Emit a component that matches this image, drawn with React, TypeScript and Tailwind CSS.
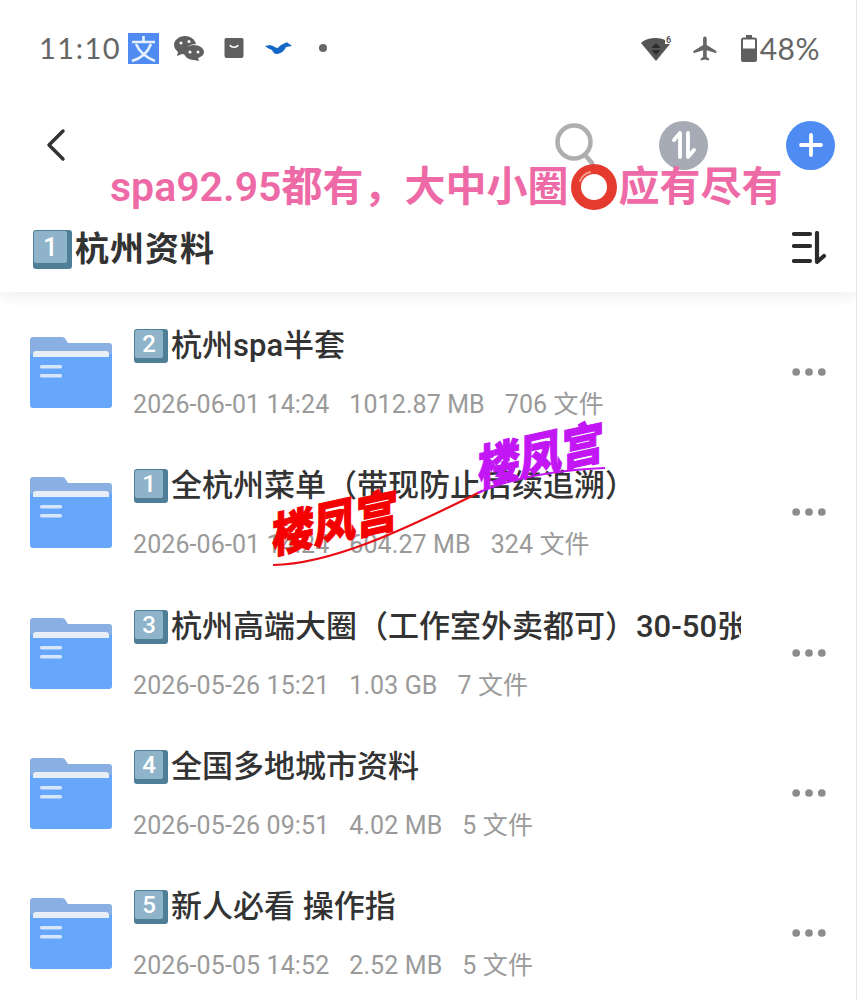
import { MoreHorizontal } from "lucide-react"

const rows = [
  { n: "2", title: "杭州spa半套", date: "2026-06-01 14:24", size: "1012.87 MB", count: "706 文件" },
  { n: "1", title: "全杭州菜单（带现防止后续追溯）", date: "2026-06-01 14:24", size: "604.27 MB", count: "324 文件" },
  { n: "3", title: "杭州高端大圈（工作室外卖都可）30-50张", date: "2026-05-26 15:21", size: "1.03 GB", count: "7 文件" },
  { n: "4", title: "全国多地城市资料", date: "2026-05-26 09:51", size: "4.02 MB", count: "5 文件" },
  { n: "5", title: "新人必看 操作指", date: "2026-05-05 14:52", size: "2.52 MB", count: "5 文件" },
]

function Keycap({ n, big }: { n: string; big?: boolean }) {
  return (
    <span
      className={`relative inline-flex shrink-0 items-center justify-center rounded-[3px] bg-[#4f7f97] ${
        big ? "h-[39px] w-[39px]" : "h-[34px] w-[34px]"
      }`}
    >
      <span
        className={`absolute left-[1px] top-[1px] flex items-center justify-center rounded-[2px] bg-[#8fb4c9] font-medium text-white ${
          big ? "h-[32px] w-[33px] text-[26px]" : "h-[28px] w-[28px] text-[24px]"
        }`}
      >
        {n}
      </span>
    </span>
  )
}

function FolderIcon() {
  return (
    <svg width="82" height="71" viewBox="0 0 82 71" className="shrink-0">
      <path d="M3 0h29c2 0 3 1 4 3l2 3h41c2 0 3 1 3 3v18H0V3c0-2 1-3 3-3z" fill="#8aafe2" />
      <path d="M0 17h82v51c0 2-1 3-3 3H3c-2 0-3-1-3-3z" fill="#66a6fb" />
      <path d="M3 17c0-2 1-3 3-3h70c2 0 3 1 3 3v3H3z" fill="#e8eef6" />
      <rect x="10" y="28" width="22" height="3.5" rx="1.5" fill="#d6e6fb" />
      <rect x="10" y="37" width="22" height="3.5" rx="1.5" fill="#d6e6fb" />
    </svg>
  )
}

function StatusLeft() {
  return (
    <div className="flex items-center text-[#666]">
      <span className="w-[89px] text-[29px] font-['Lato',sans-serif] tracking-[1.5px]">11:10</span>
      <svg width="31" height="31" viewBox="0 0 31 31">
        <rect width="31" height="31" fill="#4f8bf0" />
        <path d="M15.5 3v5M4 9h23M8 11c3 7 9 13 19 17M23 11c-3 8-9 14-19 17" stroke="#e6f0ff" strokeWidth="2.6" fill="none" />
      </svg>
      <svg width="30" height="26" viewBox="0 0 30 26" className="ml-[15px]">
        <path d="M11 1C5 1 0 5 0 10c0 3 2 5 4 7l-1 4 5-2c1 0 2 .5 3 .5C11 13 15 9 22 9 21 4 16 1 11 1z" fill="#5f5f5f" />
        <path d="M20 10c-5 0-10 3-10 7.500S15 25 20 25l5 1-1-3c3-1 6-3 6-6 0-4-5-7-10-7z" fill="#5f5f5f" />
        <circle cx="16" cy="17" r="1.500" fill="#fff" />
        <circle cx="24" cy="17" r="1.500" fill="#fff" />
        <circle cx="7" cy="8" r="1.500" fill="#fff" />
        <circle cx="15" cy="6.500" r="1.500" fill="#fff" />
      </svg>
      <svg width="20" height="20" viewBox="0 0 20 20" className="ml-[20px]">
        <path d="M2 0h16a1.500 1.500 0 0 1 1.500 1.500V18a2 2 0 0 1-2 2h-15a2 2 0 0 1-2-2V1.500A1.500 1.500 0 0 1 2 0z" fill="#5f5f5f" />
        <path d="M6 7c1 3 7 3 8 0" stroke="#fff" strokeWidth="1.600" fill="none" />
      </svg>
      <svg width="27" height="14" viewBox="0 0 27 14" className="ml-[21px]">
        <path d="M0 5l5-1 3 1c2 1 3 2 5 2 1-1 2-3 5-4 2-1 4-2 5-1l4 3-6 1c-1 3-5 7-9 7-3 0-4-2-5-4-2-1-5-2-7-4z" fill="#1467c4" />
      </svg>
      <span className="ml-[27px] h-[8px] w-[8px] rounded-full bg-[#666]" />
    </div>
  )
}

function StatusRight() {
  return (
    <div className="flex items-center text-[#666]">
      <svg width="31" height="27" viewBox="0 0 31 27">
        <path d="M0 8C4 4 10 3 15 3c4 0 7 1 9 2v4h5L15 26z" fill="#555" />
        <path d="M15 8l4.500 5h-9zM15 20l-4.500-5h9z" fill="#2e2e2e" />
        <text x="25" y="7.500" fontSize="9" fontWeight="700" fill="#555" fontFamily="Roboto, sans-serif">6</text>
      </svg>
      <svg width="29" height="29" viewBox="0 0 24 24" className="ml-[19px]" fill="#666">
        <path d="M21 16v-2l-8-5V3.500a1.500 1.500 0 0 0-3 0V9l-8 5v2l8-2.500V19l-2 1.500V22l3.500-1 3.500 1v-1.500L13 19v-5.500z" />
      </svg>
      <svg width="16" height="27" viewBox="0 0 16 27" className="ml-[21px]">
        <path d="M5 0h6v2.500h2.500A2.500 2.500 0 0 1 16 5v20a2 2 0 0 1-2 2H2a2 2 0 0 1-2-2V5a2.500 2.500 0 0 1 2.500-2.500H5z" fill="#5f5f5f" />
        <rect x="2" y="4.500" width="12" height="9" fill="#fff" />
      </svg>
      <span className="ml-[3px] text-[30px] font-['Lato',sans-serif] tracking-[0.5px]">48%</span>
    </div>
  )
}

function Row({ n, title, date, size, count }: (typeof rows)[number]) {
  return (
    <div className="flex h-[140.3px] items-start pl-[30px] pr-[25px]">
      <div className="mt-[32px]">
        <FolderIcon />
      </div>
      <div className="ml-[21px] w-[608px] min-w-0">
        <div className="mt-[23px] flex h-[36px] w-[608px] items-center overflow-hidden whitespace-nowrap text-[31px] font-medium leading-[36px] text-[#333]">
          <span className="ml-[1px] flex shrink-0">
            <Keycap n={n} />
          </span>
          <span className="ml-[3px]">{title}</span>
        </div>
        <div className="mt-[26px] flex whitespace-nowrap text-[25px] leading-[30px] tracking-[0.1px] text-[#9a9a9a]">
          <span>{date}</span>
          <span className="ml-[20px]">{size}</span>
          <span className="ml-[20px]">{count}</span>
        </div>
      </div>
      <MoreHorizontal className="mt-[45px] ml-auto h-[44px] w-[44px] fill-[#8c8c8c] text-[#8c8c8c]" strokeWidth={2.2} />
    </div>
  )
}

export default function App() {
  return (
    <div className="relative h-[1000px] w-[857px] overflow-hidden border-r border-[#e8e8e8] bg-white font-['Roboto','Noto_Sans_CJK_SC',sans-serif]">
      <header className="relative z-10 h-[292px] bg-white shadow-[0_4px_14px_rgba(0,0,0,0.07)]">
        <div className="flex h-[96px] items-center justify-between pl-[39px] pr-[36px]">
          <StatusLeft />
          <StatusRight />
        </div>
        <div className="flex h-[98px] items-center pl-[40px] pr-[21px]">
          <svg width="34" height="34" viewBox="0 0 34 34" fill="none" stroke="#333" strokeWidth="3.500" strokeLinecap="round" strokeLinejoin="round">
            <path d="M24 4L10 18l14 14" transform="translate(-1 -1)" />
          </svg>
          <svg width="44" height="48" viewBox="0 0 44 48" className="ml-auto mr-[60px] mt-[4px]" fill="none" stroke="#aeaeae" strokeWidth="4.500">
            <circle cx="19" cy="19" r="16.500" />
            <path d="M30 32l7 8" strokeLinecap="round" />
          </svg>
          <span className="mr-[78px] flex h-[49px] w-[49px] items-center justify-center rounded-full bg-[#a6abb5]">
            <svg width="26" height="30" viewBox="0 0 26 30" fill="none" stroke="#fff" strokeWidth="3.800" strokeLinecap="round" strokeLinejoin="round">
              <path d="M9 27V3L3 10M17 3v24l6-7" />
            </svg>
          </span>
          <span className="flex h-[49px] w-[49px] items-center justify-center rounded-full bg-[#4e8bf3]">
            <svg width="26" height="26" viewBox="0 0 26 26" stroke="#fff" strokeWidth="3.800" strokeLinecap="round">
              <path d="M13 3v20M3 13h20" />
            </svg>
          </span>
        </div>
        <div className="flex h-[98px] items-start justify-between pl-[33px] pr-[30px]">
          <div className="mt-[35px] flex items-center text-[34px] font-semibold leading-[40px] text-[#333]">
            <Keycap n="1" big />
            <span className="ml-[3px] tracking-[1px]">杭州资料</span>
          </div>
          <svg width="34" height="34" viewBox="0 0 34 34" fill="none" stroke="#2b2b2b" strokeWidth="4.200" strokeLinecap="round" strokeLinejoin="round" className="mt-[37px]">
            <path d="M2 3h16M2 15h16M2 30h16M25 2v29l7-6" />
          </svg>
        </div>
      </header>
      <div className="pt-[13px]">
        {rows.map((r) => (
          <Row key={r.title} {...r} />
        ))}
      </div>

      {/* pasted-on caption and watermarks */}
      <div className="absolute left-[110px] top-[163px] z-20 flex items-center whitespace-nowrap text-[41px] font-semibold leading-[48px] text-[#ee6aa7]">
        <span>spa92.95都有，大中小圈</span>
        <svg width="48" height="48" viewBox="0 0 48 48" className="ml-[1px] mr-[1px]">
          <circle cx="24" cy="24" r="18" fill="#fff" stroke="#e53a2e" strokeWidth="10" />
          <path d="M10 18a15 15 0 0 1 10-9" fill="none" stroke="#f79a8e" strokeWidth="2" strokeLinecap="round" />
        </svg>
        <span>应有尽有</span>
      </div>
      <span className="absolute left-[272px] top-[499px] z-20 -skew-y-[11deg] scale-y-[1.12] whitespace-nowrap text-[42px] font-black leading-[50px] text-[#f40000] [-webkit-text-stroke:1px_#f40000]">
        楼凤宫
      </span>
      <span className="absolute left-[478px] top-[431px] z-20 -skew-y-[11deg] scale-y-[1.12] whitespace-nowrap text-[42px] font-black leading-[50px] text-[#c316f5] [-webkit-text-stroke:1px_#c316f5]">
        楼凤宫
      </span>
      <svg width="345" height="110" viewBox="0 0 345 110" fill="none" className="absolute left-[270px] top-[462px] z-20">
        <path d="M3 103C60 102 130 70 212 29" stroke="#ea0b12" strokeWidth="2.200" />
        <path d="M208 31C245 14 290 8 335 6" stroke="#c316f5" strokeWidth="2.200" />
      </svg>
    </div>
  )
}
